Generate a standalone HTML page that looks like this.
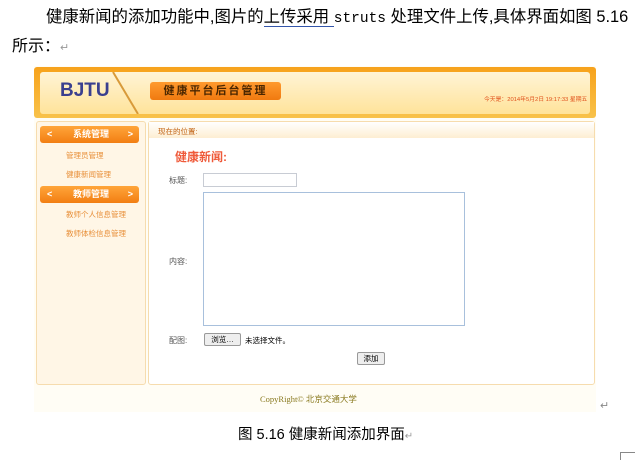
<!DOCTYPE html>
<html><head><meta charset="utf-8"><style>
*{margin:0;padding:0;box-sizing:border-box}
body{width:635px;height:460px;background:#fff;position:relative;overflow:hidden;font-family:"Liberation Sans","Noto Sans CJK SC",sans-serif;color:#000}
.a{position:absolute;white-space:nowrap}
</style></head><body>
<div class="a" style="left:46px;top:6px;font-size:16.4px;line-height:22px">健康新闻的添加功能中,图片的<span style="border-bottom:1px solid #3355aa">上传采用 </span><span style="font-family:'Liberation Mono',monospace;font-size:14.5px">struts</span> 处理文件上传,具体界面如图 5.16</div>
<div class="a" style="left:12px;top:36px;font-size:16px;line-height:22px">所示：<span style="color:#999;font-size:11px">↵</span></div>

<div class="a" style="left:34px;top:66px;width:562px;height:346px;background:#fffdf5"></div>
<div class="a" style="left:34px;top:67px;width:562px;height:51px;background:linear-gradient(#f7a21c,#f8c24a);border-radius:3px"></div>
<div class="a" style="left:40px;top:72px;width:550px;height:42px;background:linear-gradient(#fff4d6,#ffe39a);border-radius:3px"></div>
<div class="a" style="left:60px;top:80px;font-size:19px;font-weight:bold;color:#3a3f8f">BJTU</div>
<svg class="a" style="left:110px;top:72px" width="40" height="42"><line x1="3" y1="0" x2="28" y2="42" stroke="#d89a3a" stroke-width="2"/></svg>
<div class="a" style="left:150px;top:82px;width:131px;height:18px;background:linear-gradient(#ff9a2e,#f07a10);border-radius:3px;font-size:11px;font-weight:bold;color:#4a2600;text-align:center;line-height:18px;letter-spacing:2px">健康平台后台管理</div>
<div class="a" style="left:484px;top:95px;font-size:7px;color:#e0501a;transform:scale(0.83);transform-origin:0 0">今天是：2014年5月2日 19:17:33 星期五</div>
<div class="a" style="left:36px;top:121px;width:110px;height:264px;background:#fff6e6;border:1px solid #f6dcae;border-radius:3px"></div>
<div class="a" style="left:40px;top:126px;width:99px;height:17px;background:linear-gradient(#ffa53a,#f27e12);border-radius:3px;color:#fff;font-size:9px;font-weight:bold;line-height:17px"><span style="position:absolute;left:7px">&lt;</span><span style="position:absolute;left:33px">系统管理</span><span style="position:absolute;right:6px">&gt;</span></div>
<div class="a" style="left:66px;top:150px;color:#e8903a;font-size:7.5px">管理员管理</div>
<div class="a" style="left:66px;top:169px;color:#e8903a;font-size:7.5px">健康新闻管理</div>
<div class="a" style="left:40px;top:186px;width:99px;height:17px;background:linear-gradient(#ffa53a,#f27e12);border-radius:3px;color:#fff;font-size:9px;font-weight:bold;line-height:17px"><span style="position:absolute;left:7px">&lt;</span><span style="position:absolute;left:33px">教师管理</span><span style="position:absolute;right:6px">&gt;</span></div>
<div class="a" style="left:66px;top:209px;color:#e8903a;font-size:7.5px">教师个人信息管理</div>
<div class="a" style="left:66px;top:228px;color:#e8903a;font-size:7.5px">教师体检信息管理</div>
<div class="a" style="left:148px;top:121px;width:447px;height:264px;background:#fff;border:1px solid #f6dcae;border-radius:3px"></div>
<div class="a" style="left:149px;top:122px;width:445px;height:16px;background:linear-gradient(#fff,#fdeed2)"></div>
<div class="a" style="left:158px;top:126px;font-size:7.5px;color:#c06010">现在的位置:</div>
<div class="a" style="left:175px;top:148px;font-size:12px;font-weight:bold;color:#ef5a3a">健康新闻:</div>
<div class="a" style="left:169px;top:175px;font-size:8px;color:#555">标题:</div>
<div class="a" style="left:203px;top:173px;width:94px;height:14px;border:1px solid #c8ccd4"></div>
<div class="a" style="left:203px;top:192px;width:262px;height:134px;border:1px solid #a8c0dc"></div>
<div class="a" style="left:169px;top:256px;font-size:8px;color:#555">内容:</div>
<div class="a" style="left:169px;top:335px;font-size:8px;color:#555">配图:</div>
<div class="a" style="left:204px;top:333px;width:37px;height:13px;border:1px solid #999;background:#eee;border-radius:2px;font-size:7.5px;text-align:center;line-height:11px">浏览…</div>
<div class="a" style="left:245px;top:335px;font-size:7.5px">未选择文件。</div>
<div class="a" style="left:357px;top:352px;width:28px;height:13px;border:1px solid #999;background:#eee;border-radius:2px;font-size:7.5px;text-align:center;line-height:11px">添加</div>
<div class="a" style="left:260px;top:393px;font-size:8.5px;color:#8a7a20;font-family:'Liberation Serif','Noto Sans CJK SC',serif">CopyRight© 北京交通大学</div>
<div class="a" style="left:600px;top:399px;font-size:11px;color:#888">↵</div>
<div class="a" style="left:238px;top:423px;font-size:14.5px">图 5.16 健康新闻添加界面<span style="color:#999;font-size:10px">↵</span></div>
<div class="a" style="left:620px;top:452px;width:15px;height:8px;border-left:1px solid #888;border-top:1px solid #888"></div>
</body></html>
